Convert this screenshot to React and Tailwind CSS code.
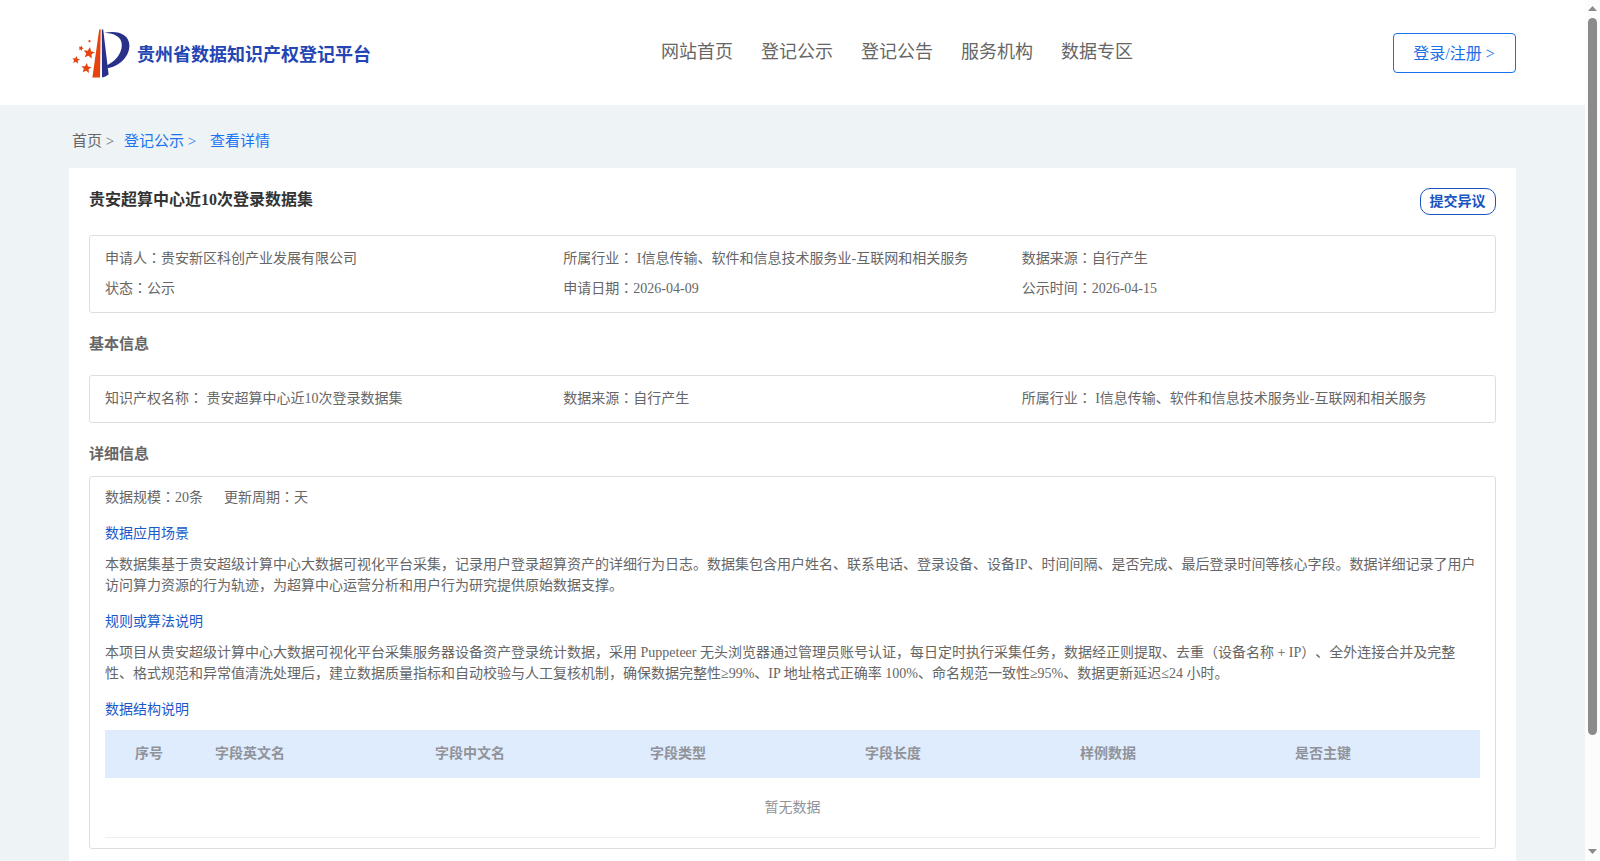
import React from 'react'

const navItems = ['网站首页', '登记公示', '登记公告', '服务机构', '数据专区']

const summary = [
  { label: '申请人', value: '贵安新区科创产业发展有限公司' },
  { label: '所属行业', value: ' I信息传输、软件和信息技术服务业-互联网和相关服务' },
  { label: '数据来源', value: '自行产生' },
  { label: '状态', value: '公示' },
  { label: '申请日期', value: '2026-04-09' },
  { label: '公示时间', value: '2026-04-15' },
]

const basicInfo = [
  { label: '知识产权名称', value: ' 贵安超算中心近10次登录数据集' },
  { label: '数据来源', value: '自行产生' },
  { label: '所属行业', value: ' I信息传输、软件和信息技术服务业-互联网和相关服务' },
]

const columns = ['字段英文名', '字段中文名', '字段类型', '字段长度', '样例数据', '是否主键']

function Star({ x, y, r, rotate = 0 }) {
  return (
    <path
      transform={`translate(${x} ${y}) rotate(${rotate}) scale(${r})`}
      d="M0-1 .28-.35 .95-.31 .45.15 .59.81 0 .46-.59.81-.45.15-.95-.31-.28-.35Z"
      fill="#e5430f"
    />
  )
}

function Logo() {
  return (
    <svg width="60" height="52" viewBox="0 0 60 52" className="shrink-0">
      <path d="M27.2 2.5h1.5L28 50.5h-7.6z" fill="#e5430f" />
      <path d="M29.8 2.5h1.4L36.6 47.6q-3 2.4-6.6 2.9z" fill="#28308a" />
      <path
        d="M32.5 5.8C46 3 57.4 7.5 57.4 18.5 57.4 30 47 39.5 35.5 41.2L35 38.2C42 35 49.8 27.500 49.800 18 49.800 10 43 6.600 32.500 5.800z"
        fill="#28308a"
      />
      <Star x={17} y={26} r={6} rotate={10} />
      <Star x={4} y={33} r={4.1} rotate={8} />
      <Star x={14.3} y={41.3} r={5.3} rotate={6} />
      <Star x={9} y={21.2} r={2.8} rotate={20} />
      <Star x={17.5} y={14.2} r={1.7} />
    </svg>
  )
}

// full-width colon, centred in its box
function Field({ label, value }) {
  return (
    <p className="whitespace-pre">
      {label}
      <span className="font-['Noto_Sans_CJK_TC',sans-serif] leading-none">：</span>
      {value}
    </p>
  )
}

function InfoGrid({ items, className }) {
  return (
    <div
      className={`grid grid-cols-3 content-start rounded-[3px] border border-[#dcdfe0] px-[15px] leading-[30px] ${className}`}
    >
      {items.map((item) => (
        <Field key={item.label} {...item} />
      ))}
    </div>
  )
}

function Scrollbar() {
  return (
    <div className="flex w-[15px] shrink-0 flex-col items-center bg-[#fcfcfc] pt-[6px] pb-[6px]">
      <svg width="9" height="5" viewBox="0 0 9 5">
        <path d="M4.5 0 9 5H0z" fill="#8b8b8b" />
      </svg>
      <div className="mt-[7px] h-[717px] w-[9px] rounded-full bg-[#8b8b8b]" />
      <svg width="9" height="5" viewBox="0 0 9 5" className="mt-auto mb-px">
        <path d="M4.5 5 9 0H0z" fill="#8b8b8b" />
      </svg>
    </div>
  )
}

export default function App() {
  return (
    <div className="flex h-[861px] w-[1600px] overflow-hidden bg-[#eef3f6] font-['Liberation_Serif','Noto_Sans_CJK_SC',serif] text-sm text-[#666] [text-spacing-trim:space-all]">
      <div className="min-w-0 flex-1 overflow-hidden">
        {/* header */}
        <header className="flex h-[105px] items-center justify-between bg-white pr-[69px] pl-[72px]">
          <div className="flex w-[589px] items-center">
            <Logo />
            <h1 className="ml-[5px] pt-[5px] text-lg leading-6 font-bold whitespace-nowrap text-[#2446b4]">
              贵州省数据知识产权登记平台
            </h1>
          </div>
          <nav className="flex flex-1 gap-7 pb-0.5 text-lg leading-6">
            {navItems.map((item) => (
              <a key={item} href="#" className="whitespace-nowrap">
                {item}
              </a>
            ))}
          </nav>
          <button className="h-10 w-[123px] rounded border border-[#1a6fec] pt-0.5 pr-px text-base leading-6 text-[#1a6fec]">
            登录/注册 &gt;
          </button>
        </header>

        {/* breadcrumb */}
        <div className="flex h-[63px] items-center pt-2 pl-[72px] text-[15px] leading-5 whitespace-nowrap text-[#1a73f0]">
          <span className="w-[52px] text-[#666]">首页 &gt;</span>
          <span className="w-[86px]">登记公示 &gt;</span>
          <span>查看详情</span>
        </div>

        <main className="mx-[69px] h-[720px] bg-white px-5 pt-5">
          <div className="flex h-[47px] items-start justify-between">
            <h2 className="text-base leading-6 font-bold text-[#333]">贵安超算中心近10次登录数据集</h2>
            <button className="h-[27px] w-[76px] rounded-[10px] border border-[#1a55bf] pr-px text-sm leading-5 font-bold text-[#1a55bf]">
              提交异议
            </button>
          </div>

          <InfoGrid items={summary} className="h-[78px] pt-2" />

          <h3 className="mt-[19px] h-[43px] text-[15px] leading-6 font-bold">基本信息</h3>
          <InfoGrid items={basicInfo} className="h-12 pt-2" />

          <h3 className="mt-[19px] h-[34px] text-[15px] leading-6 font-bold">详细信息</h3>
          <section className="h-[373px] rounded-[3px] border border-[#dcdfe0] px-[15px] pt-[10px] leading-[21px]">
            <div className="flex">
              <div className="w-[119px]">
                <Field label="数据规模" value="20条" />
              </div>
              <Field label="更新周期" value="天" />
            </div>

            <h4 className="mt-[15px] text-[#1a5ac8]">数据应用场景</h4>
            <p className="mt-[10px]">
              本数据集基于贵安超级计算中心大数据可视化平台采集，记录用户登录超算资产的详细行为日志。数据集包含用户姓名、联系电话、登录设备、设备IP、时间间隔、是否完成、最后登录时间等核心字段。数据详细记录了用户访问算力资源的行为轨迹，为超算中心运营分析和用户行为研究提供原始数据支撑。
            </p>

            <h4 className="mt-[15px] text-[#1a5ac8]">规则或算法说明</h4>
            <p className="mt-[10px]">
              本项目从贵安超级计算中心大数据可视化平台采集服务器设备资产登录统计数据，采用 Puppeteer 无头浏览器通过管理员账号认证，每日定时执行采集任务，数据经正则提取、去重（设备名称 + IP）、全外连接合并及完整性、格式规范和异常值清洗处理后，建立数据质量指标和自动校验与人工复核机制，确保数据完整性≥99%、IP 地址格式正确率 100%、命名规范一致性≥95%、数据更新延迟≤24 小时。
            </p>

            <h4 className="mt-[15px] text-[#1a5ac8]">数据结构说明</h4>
            <div className="mt-[10px] border-b border-[#ebeef5] text-[#909399]">
              <div className="grid h-12 grid-cols-[80px_220px_215px_215px_215px_215px_185px] items-center bg-[#dfecfe] pb-0.5 pl-[30px] font-bold">
                <span>序号</span>
                {columns.map((col) => (
                  <span key={col}>{col}</span>
                ))}
              </div>
              <p className="h-[59px] text-center leading-[60px]">暂无数据</p>
            </div>
          </section>
        </main>
      </div>
      <Scrollbar />
    </div>
  )
}
